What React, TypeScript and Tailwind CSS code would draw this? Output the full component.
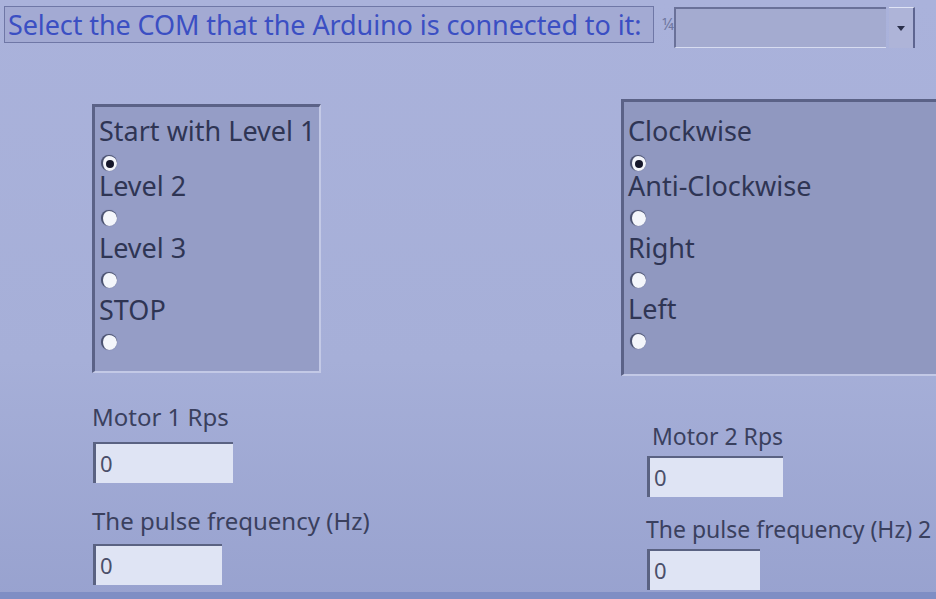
import React from "react";

const font = { fontFamily: '"Noto Sans", "Open Sans", sans-serif' };

function Radio({ on }: { on?: boolean }) {
  return (
    <div className="w-[16px] h-[16px] rounded-full bg-[#f4f6fb] border-l-2 border-t border-[#4a5170] flex items-center justify-center shadow-[0_0_1px_#6b7394]">
      {on && <div className="w-[8px] h-[8px] rounded-full bg-[#15172a]" />}
    </div>
  );
}

function Item({ label, on, mt }: { label: string; on?: boolean; mt: string }) {
  return (
    <div className={`${mt} h-[55px]`}>
      <div className="text-[27px] leading-[30px] text-[#2f3554] whitespace-nowrap">{label}</div>
      <div className="h-[16px] mt-[9px] ml-[2px]">
        <Radio on={on} />
      </div>
    </div>
  );
}

function Field({ w }: { w: string }) {
  return (
    <div className={`${w} h-[41px] bg-[#dfe4f4] border-l-[3px] border-t-2 border-[#5a6282] flex items-center pl-[4px] text-[22px] text-[#4a4f6a]`}>
      0
    </div>
  );
}

export default function App() {
  return (
    <div
      style={font}
      className="w-[936px] h-[599px] overflow-hidden flex flex-col bg-[linear-gradient(180deg,#aab2db_0%,#a6afd8_60%,#98a2cf_100%)]"
    >
      <div className="flex items-start pt-[6px] pl-[4px] h-[50px] shrink-0">
        <div className="w-[650px] shrink-0 h-[37px] bg-[#a3aad3] border border-[#6f77a6] flex items-center pl-[3px]">
          <span className="text-[27px] leading-[32px] tracking-[-0.1px] text-[#3b4fc3] whitespace-nowrap">
            Select the COM that the Arduino is connected to it:
          </span>
        </div>
        <div className="ml-[8px] mt-[1px] flex items-stretch h-[41px] shrink-0">
          <div className="w-[12px] text-[16px] text-[#6f77a0] leading-[18px] pt-[8px]">¼</div>
          <div className="w-[212px] bg-[#a4abd0] border-t-2 border-l-2 border-[#6a7199] border-b border-b-[#d7dcf0]" />
          <div className="w-[26px] ml-[3px] bg-[#aeb4d8] border-r-2 border-[#5e6590] border-t border-t-[#dfe3f5] flex items-center justify-center">
            <div className="w-0 h-0 border-l-[4px] border-r-[4px] border-t-[5px] border-l-transparent border-r-transparent border-t-[#2a2f4a]" />
          </div>
        </div>
      </div>

      <div className="flex flex-1">
        <div className="ml-[92px] w-[300px] shrink-0 flex flex-col">
          <div className="mt-[54px] w-[229px] h-[269px] bg-[#959dc6] border-l-[3px] border-t-[3px] border-[#5b6287] border-r-2 border-r-[#c3c9e6] border-b-2 border-b-[#c3c9e6] pl-[4px] pt-[9px]">
            <Item label="Start with Level 1" on mt="mt-0" />
            <Item label="Level 2" mt="mt-0" />
            <Item label="Level 3" mt="mt-[7px]" />
            <Item label="STOP" mt="mt-[7px]" />
          </div>
          <div className="mt-[29px] text-[24px] leading-[30px] text-[#3a405e] whitespace-nowrap">Motor 1 Rps</div>
          <div className="mt-[10px] ml-[1px]"><Field w="w-[140px]" /></div>
          <div className="mt-[23px] text-[24px] leading-[30px] text-[#3a405e] whitespace-nowrap">The pulse frequency (Hz)</div>
          <div className="mt-[8px] ml-[1px]"><Field w="w-[129px]" /></div>
        </div>

        <div className="ml-[229px] w-[315px] shrink-0 flex flex-col">
          <div className="mt-[49px] w-[315px] h-[277px] bg-[#9098c0] border-l-[3px] border-t-[3px] border-[#5b6287] border-b-2 border-b-[#c3c9e6] pl-[4px] pt-[14px]">
            <Item label="Clockwise" on mt="mt-0" />
            <Item label="Anti-Clockwise" mt="mt-0" />
            <Item label="Right" mt="mt-[7px]" />
            <Item label="Left" mt="mt-[6px]" />
          </div>
          <div className="mt-[45px] ml-[31px] text-[23px] leading-[30px] text-[#3a405e] whitespace-nowrap">Motor 2 Rps</div>
          <div className="mt-[5px] ml-[26px]"><Field w="w-[136px]" /></div>
          <div className="mt-[17px] ml-[25px] text-[23px] leading-[30px] text-[#3a405e] whitespace-nowrap">The pulse frequency (Hz) 2</div>
          <div className="mt-[5px] ml-[26px]"><Field w="w-[113px]" /></div>
        </div>
      </div>
      <div className="h-[7px] bg-[#7f8ec4] shrink-0" />
    </div>
  );
}
